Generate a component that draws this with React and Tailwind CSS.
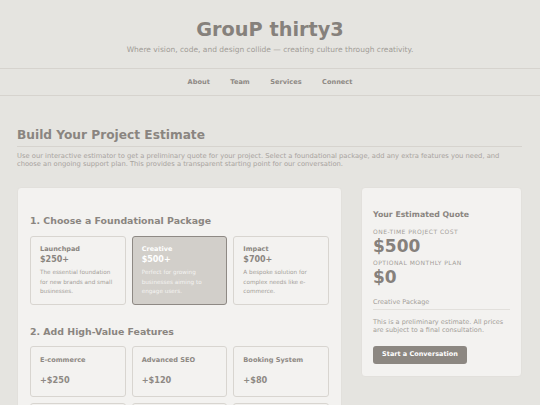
import React from "react";

const packages = [
  { name: "Launchpad", price: "$250+", desc: "The essential foundation for new brands and small businesses." },
  { name: "Creative", price: "$500+", desc: "Perfect for growing businesses aiming to engage users.", selected: true },
  { name: "Impact", price: "$700+", desc: "A bespoke solution for complex needs like e-commerce." },
];

const features = [
  { name: "E-commerce", price: "+$250" },
  { name: "Advanced SEO", price: "+$120" },
  { name: "Booking System", price: "+$80" },
  { name: "Blog Setup", price: "+$60" },
  { name: "Analytics", price: "+$50" },
  { name: "Multilingual", price: "+$150" },
];

export default function App() {
  return (
    <div
      className="h-[405px] w-[540px] overflow-hidden bg-[#e5e4e0] text-[#8a8580]"
      style={{ fontFamily: '"DejaVu Sans", Verdana, sans-serif' }}
    >
      <header className="flex flex-col items-center pt-[18px] pb-[13px] border-b border-[#d6d3ce]">
        <h1 className="text-[19.3px] leading-[23px] font-bold text-[#86817c]">GrouP thirty3</h1>
        <p className="mt-[4px] text-[7.5px] leading-[10px] text-[#a19c97]">
          Where vision, code, and design collide — creating culture through creativity.
        </p>
      </header>
      <nav className="flex h-[27px] items-center justify-center gap-[20.5px] border-b border-[#d6d3ce] pt-[1px] text-[6.6px] font-bold text-[#8e8984]">
        <span>About</span>
        <span>Team</span>
        <span>Services</span>
        <span>Connect</span>
      </nav>
      <main className="pl-[17px] pr-[18px] pt-[31px]">
        <h2 className="text-[12.2px] leading-[16px] font-bold text-[#8a8580] pb-[3px] border-b border-[#d6d3ce]">
          Build Your Project Estimate
        </h2>
        <p className="mt-[6px] text-[6.75px] leading-[7.5px] text-[#a8a39e]">
          Use our interactive estimator to get a preliminary quote for your project. Select a foundational package, add any extra features you need, and choose an ongoing support plan. This provides a transparent starting point for our conversation.
        </p>
        <div className="mt-[19px] flex items-start gap-[19px]">
          <section className="w-[325px] shrink-0 rounded-[4px] border border-[#e2e0dc] bg-[#f3f2f0] px-[12px] pt-[26px] pb-[20px]">
            <h3 className="text-[9.4px] leading-[13px] font-bold text-[#8a8580]">1. Choose a Foundational Package</h3>
            <div className="mt-[9px] grid grid-cols-3 gap-[6px]">
              {packages.map((p) => (
                <div
                  key={p.name}
                  className={
                    p.selected
                      ? "h-[69px] rounded-[3px] border border-[#8e8984] bg-[#d2cfca] pl-[9px] pr-[7px] pt-[7px]"
                      : "h-[69px] rounded-[3px] border border-[#d8d5d0] bg-[#f3f2f0] pl-[9px] pr-[7px] pt-[7px]"
                  }
                >
                  <div className={p.selected ? "text-[6.5px] leading-[10px] font-bold text-white" : "text-[6.5px] leading-[10px] font-bold text-[#8a8580]"}>
                    {p.name}
                  </div>
                  <div className={p.selected ? "text-[8px] leading-[12px] font-bold text-white" : "text-[8px] leading-[12px] font-bold text-[#8a8580]"}>
                    {p.price}
                  </div>
                  <div className={p.selected ? "mt-[2px] text-[5.7px] leading-[9.5px] text-[#f5f4f2]" : "mt-[2px] text-[5.7px] leading-[9.5px] text-[#a39e99]"}>
                    {p.desc}
                  </div>
                </div>
              ))}
            </div>
            <h3 className="mt-[20px] text-[9.4px] leading-[13px] font-bold text-[#8a8580]">2. Add High-Value Features</h3>
            <div className="mt-[8px] grid grid-cols-3 gap-[6px]">
              {features.map((f) => (
                <div key={f.name} className="h-[51px] rounded-[3px] border border-[#d8d5d0] bg-[#f3f2f0] px-[9px] pt-[8px]">
                  <div className="text-[6.6px] leading-[10px] font-bold text-[#8e8984]">{f.name}</div>
                  <div className="mt-[10px] text-[8.2px] leading-[10px] font-bold text-[#8e8984]">{f.price}</div>
                </div>
              ))}
            </div>
          </section>
          <aside className="w-[161px] shrink-0 rounded-[4px] border border-[#e2e0dc] bg-[#f3f2f0] px-[11px] pt-[21px] pb-[12px]">
            <h3 className="text-[7.8px] leading-[11px] font-bold text-[#8a8580]">Your Estimated Quote</h3>
            <div className="mt-[8px] text-[6px] leading-[8px] uppercase tracking-[0.08em] text-[#a39e99]">One-time project cost</div>
            <div className="text-[17px] leading-[20px] font-bold text-[#86817c]">$500</div>
            <div className="mt-[3px] text-[6px] leading-[8px] uppercase tracking-[0.08em] text-[#a39e99]">Optional monthly plan</div>
            <div className="text-[17px] leading-[20px] font-bold text-[#86817c]">$0</div>
            <div className="mt-[11px] pb-[2px] border-b border-[#e2e0dc] text-[6.5px] leading-[9px] text-[#a39e99]">Creative Package</div>
            <p className="mt-[8px] text-[6.5px] leading-[8px] text-[#a39e99]">
              This is a preliminary estimate. All prices are subject to a final consultation.
            </p>
            <button className="mt-[12px] h-[18px] w-[94px] rounded-[3px] bg-[#8c8781] text-[6.5px] font-bold text-white">
              Start a Conversation
            </button>
          </aside>
        </div>
      </main>
    </div>
  );
}
